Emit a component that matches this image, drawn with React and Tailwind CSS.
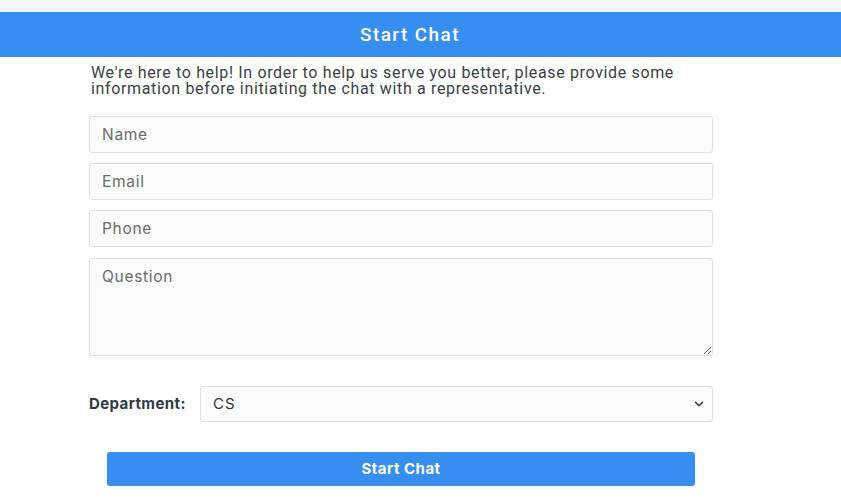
import { ChevronDown } from "lucide-react";

const inputCls =
  "w-full h-[37px] px-3 rounded-[3px] border border-[#dde0e4] bg-[#fafbfc] text-[15.5px] tracking-[0.7px] text-[#333] placeholder:text-[#6b6b6b] outline-none";

export default function App() {
  return (
    <div className="w-[841px] h-[500px] bg-white overflow-hidden" style={{ fontFamily: "Inter, 'Liberation Sans', sans-serif" }}>
      <div className="h-[12px] bg-[#f4f5f7]" />
      <div className="h-[45px] bg-[#358ef0] flex items-center justify-center">
        <h1 className="text-white text-[19px] tracking-[1.4px] font-medium ml-[-21px] mt-[2px]" style={{ fontFamily: "Roboto, sans-serif" }}>
          Start Chat
        </h1>
      </div>

      <div className="ml-[89px] w-[624px]">
        <p className="mt-[8px] ml-[2px] w-[600px] text-[16px] tracking-[0.65px] leading-[16px] text-[#3a3f44]" style={{ fontFamily: "Roboto, sans-serif" }}>
          We're here to help! In order to help us serve you better, please provide some information before initiating the chat with a representative.
        </p>

        <div className="mt-[19px] flex flex-col gap-[10px]">
          <input className={inputCls} placeholder="Name" />
          <input className={inputCls} placeholder="Email" />
          <input className={inputCls} placeholder="Phone" />
          <textarea
            className="w-full h-[98px] mt-[1px] px-3 py-[6px] rounded-[3px] border border-[#dde0e4] bg-[#fafbfc] text-[15.5px] tracking-[0.7px] text-[#333] placeholder:text-[#6b6b6b] outline-none"
            placeholder="Question"
          />
        </div>

        <div className="mt-[30px] flex items-center">
          <label className="w-[111px] text-[15px] tracking-[0.4px] font-bold text-[#2f3a45]">Department:</label>
          <div className="relative flex-1">
            <select className="appearance-none w-full h-[36px] px-3 rounded-[3px] border border-[#dde0e4] bg-[#fafbfc] text-[15px] tracking-[1px] text-[#333] outline-none">
              <option>CS</option>
            </select>
            <ChevronDown className="absolute right-[7px] top-[11px] w-[14px] h-[14px] text-[#333] pointer-events-none" strokeWidth={2.5} />
          </div>
        </div>

        <div className="mt-[30px] pl-[18px] pr-[18px]">
          <button className="w-full h-[34px] rounded-[3px] bg-[#358ef0] text-white text-[15px] tracking-[0.5px] font-bold">
            Start Chat
          </button>
        </div>
      </div>
    </div>
  );
}
